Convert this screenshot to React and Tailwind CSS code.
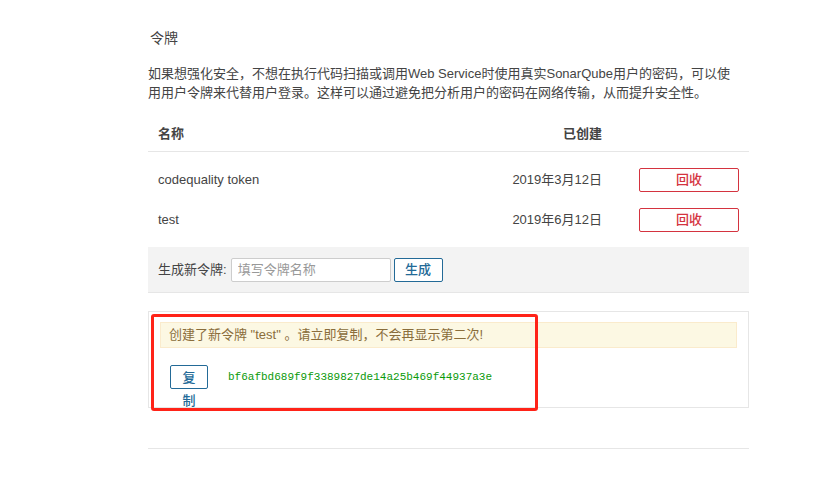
import React from 'react';

const tokens = [
  { id: 1, name: 'codequality token', created: '2019年3月12日' },
  { id: 2, name: 'test', created: '2019年6月12日' },
];

export default function App() {
  return (
    <div className="relative w-[815px] h-[479px] bg-white text-[#444] font-['Liberation_Sans','Noto_Sans_CJK_SC',sans-serif]">
      <div className="ml-[148px] w-[601px] pt-[28px]">
        <h2 className="pl-[2px] text-[14px] leading-[20px] font-normal">令牌</h2>
        <p className="mt-[16px] text-[13px] leading-[19px]">
          如果想强化安全，不想在执行代码扫描或调用Web Service时使用真实SonarQube用户的密码，可以使
          <br />
          用用户令牌来代替用户登录。这样可以通过避免把分析用户的密码在网络传输，从而提升安全性。
        </p>

        {/* token table */}
        <div className="mt-[16px] h-[34px] flex items-center pl-[10px] pr-[10px] border-b border-[#e6e6e6] text-[13px] font-bold pb-[1px]">
          <span className="flex-1">名称</span>
          <span>已创建</span>
          <span className="w-[137px]" />
        </div>
        <div className="pt-[8px]">
          {tokens.map(t => (
            <div key={t.id} className="h-[40px] flex items-center pl-[10px] pr-[10px] text-[13px]">
              <span className="flex-1">{t.name}</span>
              <span className="mr-[1px]">{t.created}</span>
              <button className="ml-[36px] w-[100px] h-[24px] border border-[#d4333f] rounded-[2px] text-[#d4333f] text-[13px] leading-[22px] font-medium bg-white">
                回收
              </button>
            </div>
          ))}
        </div>

        <div className="mt-[7px] h-[46px] bg-[#f3f3f3] border-b border-[#e6e6e6] flex items-center pl-[10px] text-[13px]">
          <span className="mr-[4px]">生成新令牌:</span>
          <input
            className="w-[160px] h-[24px] border border-[#cdcdcd] rounded-[2px] bg-white px-[6px] text-[13px] placeholder:text-[#999] outline-none"
            placeholder="填写令牌名称"
          />
          <button className="ml-[3px] w-[49px] h-[24px] border border-[#236a97] rounded-[2px] text-[#236a97] text-[13px] font-medium leading-[22px] bg-white">
            生成
          </button>
        </div>

        {/* new token box */}
        <div className="mt-[18px] border border-[#e6e6e6] pt-[10px] pb-[18px] px-[11px]">
          <div className="h-[26px] bg-[#fcf8e3] border border-[#faebcc] text-[#8a6d3b] text-[13px] leading-[24px] pl-[8px]">
            创建了新令牌 "test" 。请立即复制，不会再显示第二次!
          </div>
          <div className="mt-[17px] flex items-start pl-[10px]">
            <button className="w-[38px] h-[24px] px-[11px] border border-[#236a97] rounded-[2px] text-[#236a97] text-[13px] font-medium leading-[23px] bg-white break-all">
              复制
            </button>
            <code className="ml-[20px] text-[11px] leading-[24px] text-[#0a9a0a] font-['Liberation_Mono',monospace]">
              bf6afbd689f9f3389827de14a25b469f44937a3e
            </code>
          </div>
        </div>

        <div className="mt-[40px] h-px bg-[#e6e6e6]" />
      </div>

      {/* red annotation frame */}
      <div className="absolute left-[151px] top-[314px] w-[387px] h-[97px] border-[3px] border-[#ff2318] rounded-[3px] pointer-events-none" />
    </div>
  );
}
